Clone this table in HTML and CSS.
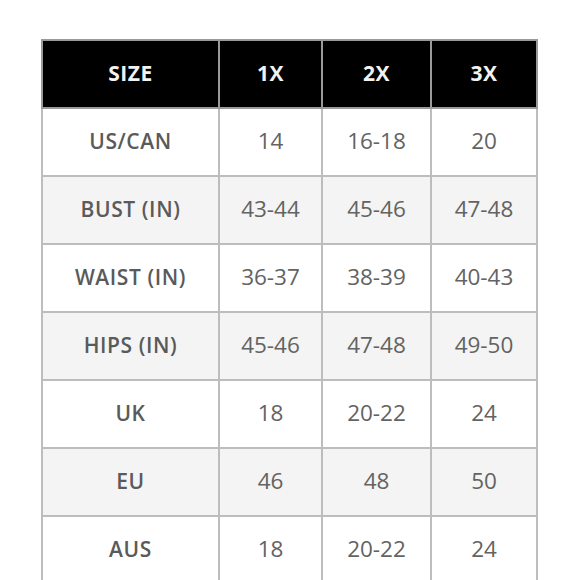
FILE: index.html
```html
<!DOCTYPE html>
<html>
<head>
<meta charset="utf-8">
<link rel="stylesheet" href="styles.css">
</head>
<body>
<div class="page">
<table class="chart">
  <colgroup>
    <col class="c0"><col class="c1"><col class="c2"><col class="c3">
  </colgroup>
  <thead>
    <tr><th>SIZE</th><th>1X</th><th>2X</th><th>3X</th></tr>
  </thead>
  <tbody>
    <tr><td class="lbl">US/CAN</td><td>14</td><td>16-18</td><td>20</td></tr>
    <tr class="alt"><td class="lbl">BUST (IN)</td><td>43-44</td><td>45-46</td><td>47-48</td></tr>
    <tr><td class="lbl">WAIST (IN)</td><td>36-37</td><td>38-39</td><td>40-43</td></tr>
    <tr class="alt"><td class="lbl">HIPS (IN)</td><td>45-46</td><td>47-48</td><td>49-50</td></tr>
    <tr><td class="lbl">UK</td><td>18</td><td>20-22</td><td>24</td></tr>
    <tr class="alt"><td class="lbl">EU</td><td>46</td><td>48</td><td>50</td></tr>
    <tr><td class="lbl">AUS</td><td>18</td><td>20-22</td><td>24</td></tr>
  </tbody>
</table>
</div>
</body>
</html>
```
FILE: styles.css
```css
html, body {
  margin: 0;
  padding: 0;
  background: #fff;
}
.page {
  padding: 39px 0 0 41px;
}
.chart {
  border-collapse: collapse;
  table-layout: fixed;
  width: 495px;
  font-family: "Open Sans", "Noto Sans", sans-serif;
  color: #5c5c5c;
}
.c0 { width: 177px; }
.c1 { width: 103px; }
.c2 { width: 109px; }
.c3 { width: 106px; }
.chart th, .chart td {
  border: 2px solid #bdbdbd;
  height: 63px;
  padding: 0 0 3px 0;
  text-align: center;
  vertical-align: middle;
}
.chart th {
  background: #000;
  color: #f2f2f2;
  font-weight: 700;
  font-size: 21px;
  letter-spacing: 0.5px;
  border-color: #9a9a9a;
}
.chart td {
  font-size: 22.5px;
  font-weight: 400;
  color: #636363;
}
.chart td.lbl {
  font-weight: 600;
  font-size: 21px;
  letter-spacing: 0.6px;
  color: #5a5a5a;
}
.alt td {
  background: #f4f4f4;
}
```
